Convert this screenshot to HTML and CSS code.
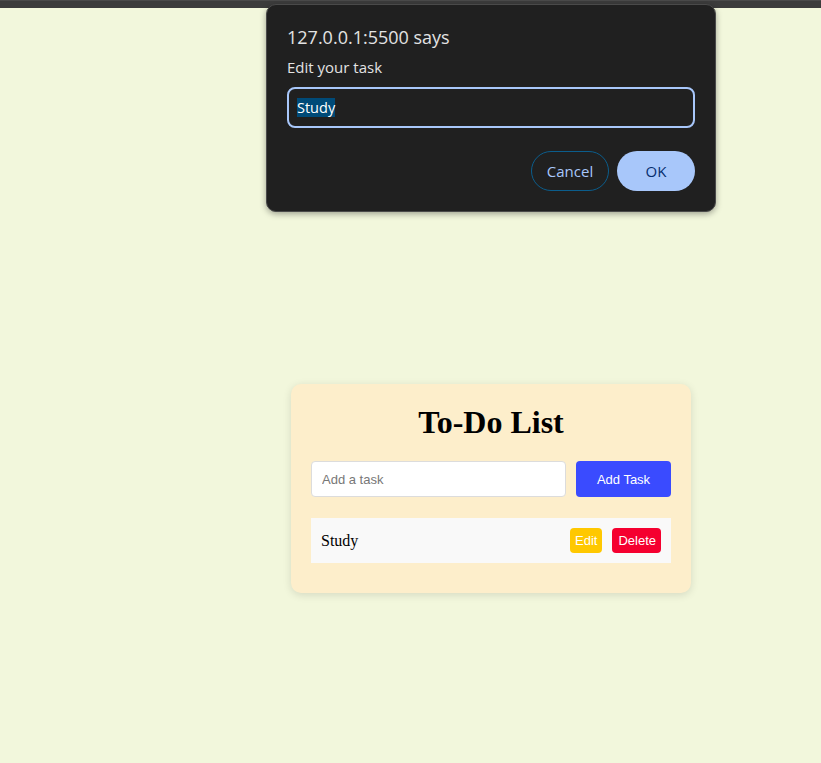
FILE: index.html
```html
<!DOCTYPE html>
<html>
<head>
<meta charset="utf-8">
<link rel="stylesheet" href="styles.css">
</head>
<body>
<div class="topbar"></div>
<main class="page">
  <div class="card">
    <h1 class="title">To-Do List</h1>
    <div class="add-row">
      <input class="task-input" type="text" placeholder="Add a task">
      <button class="add-btn">Add Task</button>
    </div>
    <ul class="list">
      <li class="item">
        <span class="item-text">Study</span>
        <div class="actions">
          <button class="edit-btn">Edit</button>
          <button class="del-btn">Delete</button>
        </div>
      </li>
    </ul>
  </div>
</main>
<div class="dialog">
  <div class="dlg-title">127.0.0.1:5500 says</div>
  <div class="dlg-msg">Edit your task</div>
  <div class="dlg-input"><span class="sel">Study</span></div>
  <div class="dlg-buttons">
    <button class="btn-cancel">Cancel</button>
    <button class="btn-ok">OK</button>
  </div>
</div>
</body>
</html>
```
FILE: styles.css
```css
html, body {
  margin: 0;
  padding: 0;
}
body {
  background: #f2f7dc;
  height: 763px;
  overflow: hidden;
  font-family: "Liberation Serif", serif;
}
.topbar {
  height: 7px;
  background: #3c3c3c;
  border-top: 1px solid #4a4a4a;
}
.page {
  padding-top: 376px;
  padding-left: 291px;
}
.card {
  width: 360px;
  padding: 20px 20px 30px;
  background: #fdeecb;
  border-radius: 10px;
  box-shadow: 0 2px 8px rgba(0, 0, 0, 0.12);
}
.title {
  margin: 0;
  text-align: center;
  font-size: 32px;
  line-height: 37px;
  font-weight: bold;
  padding-bottom: 2px;
}
.add-row {
  display: flex;
  gap: 10px;
  margin-top: 18px;
}
.task-input {
  flex: 1;
  height: 36px;
  box-sizing: border-box;
  border: 1px solid #dcdcdc;
  border-radius: 4px;
  padding: 0 10px;
  font-family: "Liberation Sans", Arial, sans-serif;
  font-size: 13px;
  background: #fff;
  outline: none;
}
.task-input::placeholder {
  color: #777;
}
.add-btn {
  width: 95px;
  height: 36px;
  border: none;
  border-radius: 4px;
  background: #3a4bff;
  color: #fff;
  font-family: "Liberation Sans", Arial, sans-serif;
  font-size: 13px;
}
.list {
  list-style: none;
  margin: 21px 0 0;
  padding: 0;
}
.item {
  display: flex;
  align-items: center;
  justify-content: space-between;
  height: 45px;
  background: #f9f9f9;
  padding: 0 10px;
}
.item-text {
  font-size: 16px;
}
.actions {
  display: flex;
  gap: 10px;
}
.edit-btn, .del-btn {
  height: 25px;
  border: none;
  border-radius: 4px;
  color: #fff;
  font-family: "Liberation Sans", Arial, sans-serif;
  font-size: 13px;
  padding: 0 5px;
}
.edit-btn {
  background: #ffc800;
}
.del-btn {
  background: #f5002f;
  padding: 0 5px 0 6px;
}
.dialog {
  position: absolute;
  left: 266px;
  top: 4px;
  width: 450px;
  height: 208px;
  box-sizing: border-box;
  background: #202020;
  border: 1px solid #4a4a4a;
  border-radius: 10px;
  box-shadow: 0 2px 6px rgba(0, 0, 0, 0.35);
  padding: 0 20px;
  font-family: "Open Sans", "Noto Sans", sans-serif;
  color: #e3e3e3;
}
.dlg-title {
  margin-top: 20px;
  font-size: 18px;
  line-height: 24px;
}
.dlg-msg {
  margin-top: 8px;
  font-size: 15px;
  line-height: 20px;
}
.dlg-input {
  margin-top: 10px;
  height: 41px;
  box-sizing: border-box;
  border: 2px solid #a8c7fa;
  border-radius: 8px;
  display: flex;
  align-items: center;
  padding-left: 8px;
  font-size: 14.5px;
}
.sel {
  background: #004a77;
  color: #fff;
  line-height: 19px;
}
.dlg-buttons {
  display: flex;
  justify-content: flex-end;
  gap: 8px;
  margin-top: 23px;
}
.btn-cancel, .btn-ok {
  width: 78px;
  height: 40px;
  border-radius: 20px;
  font-family: "Open Sans", "Noto Sans", sans-serif;
  font-size: 15px;
}
.btn-cancel {
  background: transparent;
  border: 1px solid #0b5d8c;
  color: #a8c7fa;
}
.btn-ok {
  background: #a8c7fa;
  border: none;
  color: #062e6f;
}
```
